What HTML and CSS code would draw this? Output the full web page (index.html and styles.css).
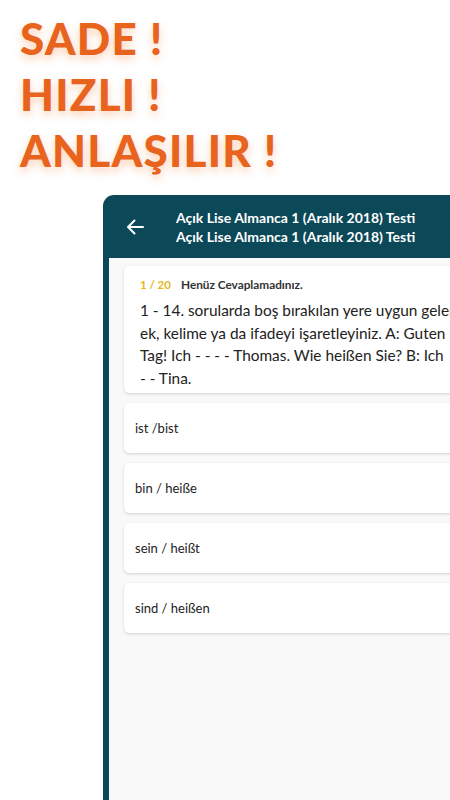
FILE: index.html
```html
<!DOCTYPE html>
<html lang="tr">
<head>
<meta charset="utf-8">
<link rel="stylesheet" href="styles.css">
</head>
<body>
<div class="hero">
  <div class="slogan">SADE !</div>
  <div class="slogan">HIZLI !</div>
  <div class="slogan">ANLAŞILIR !</div>
</div>
<div class="phone">
  <div class="appbar">
    <svg class="back" width="18" height="16" viewBox="0 0 18 16"><path d="M17 8H2M8.5 1.5L2 8l6.5 6.5" fill="none" stroke="#fff" stroke-width="2" stroke-linecap="round" stroke-linejoin="round"/></svg>
    <div class="titles">
      <div>Açık Lise Almanca 1 (Aralık 2018) Testi</div>
      <div>Açık Lise Almanca 1 (Aralık 2018) Testi</div>
    </div>
  </div>
  <div class="content">
    <div class="card question">
      <div class="meta"><span class="count">1 / 20</span><span class="status">Henüz Cevaplamadınız.</span></div>
      <p class="qtext">1 - 14. sorularda boş bırakılan yere uygun gelen ek, kelime ya da ifadeyi işaretleyiniz. A: Guten Tag! Ich - - - - Thomas. Wie heißen Sie? B: Ich <span class="nowrap">- - Tina.</span></p>
    </div>
    <div class="card option">ist /bist</div>
    <div class="card option">bin / heiße</div>
    <div class="card option">sein / heißt</div>
    <div class="card option">sind / heißen</div>
  </div>
</div>
</body>
</html>
```
FILE: styles.css
```css
html, body {
  margin: 0;
  padding: 0;
  background: #fff;
  width: 450px;
  height: 800px;
  overflow: hidden;
}
body {
  font-family: Lato, "Noto Sans", sans-serif;
}
.hero {
  padding: 10px 0 0 20px;
  height: 195px;
  box-sizing: border-box;
}
.slogan {
  font-family: Lato, sans-serif;
  font-weight: 900;
  font-size: 44px;
  line-height: 56px;
  color: #e8631d;
  letter-spacing: 1.2px;
  text-shadow: 0 4px 8px rgba(240, 120, 40, 0.35);
}
.phone {
  margin-left: 103px;
  width: 390px;
  height: 605px;
  background: #0b4858;
  border-radius: 11px 11px 0 0;
  display: flex;
  flex-direction: column;
}
.appbar {
  height: 63px;
  display: flex;
  align-items: center;
  flex-shrink: 0;
}
.back {
  margin-left: 23px;
  margin-right: 32px;
}
.titles {
  color: #fff;
  font-size: 14px;
  font-weight: 700;
  line-height: 19px;
}
.content {
  flex: 1;
  margin-left: 6px;
  background: #f9f9f9;
  padding: 8px 0 0 15px;
  display: flex;
  flex-direction: column;
  gap: 10px;
}
.card {
  background: #fff;
  border-radius: 5px;
  box-shadow: 0 1px 3px rgba(0, 0, 0, 0.16);
}
.question {
  padding: 12px 31px 4px 16px;
}
.meta {
  display: flex;
  align-items: center;
  gap: 10px;
  line-height: 14px;
}
.count {
  color: #e6b81c;
  font-weight: 700;
  font-size: 11.5px;
}
.status {
  color: #333;
  font-weight: 700;
  font-size: 11.8px;
}
.qtext {
  margin: 7px 0 0;
  font-size: 15.4px;
  line-height: 22.5px;
  color: #222;
}
.nowrap {
  white-space: nowrap;
}
.option {
  height: 50px;
  display: flex;
  align-items: center;
  padding-left: 11px;
  font-size: 13px;
  color: #222;
}
```
